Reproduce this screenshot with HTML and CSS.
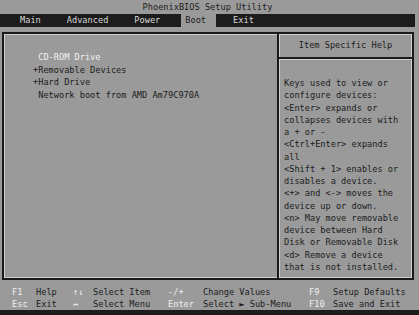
FILE: index.html
```html
<!DOCTYPE html>
<html lang="en">
<head>
    <meta charset="UTF-8">
    <title>PhoenixBIOS Setup Utility</title>
    <link rel="stylesheet" href="styles.css">
</head>
<body>
    <header class="title">PhoenixBIOS Setup Utility</header>
    <nav class="menu">
        <span class="tab">Main</span>
        <span class="tab">Advanced</span>
        <span class="tab">Power</span>
        <span class="tab active">Boot</span>
        <span class="tab">Exit</span>
    </nav>
    <main class="panel">
        <section class="boot-list">
            <p class="item selected"> CD-ROM Drive</p>
            <p class="item">+Removable Devices</p>
            <p class="item">+Hard Drive</p>
            <p class="item"> Network boot from AMD Am79C970A</p>
        </section>
        <aside class="help">
            <h2 class="help-title">Item Specific Help</h2>
            <div class="help-body">
                <p>Keys used to view or</p>
                <p>configure devices:</p>
                <p>&lt;Enter&gt; expands or</p>
                <p>collapses devices with</p>
                <p>a + or -</p>
                <p>&lt;Ctrl+Enter&gt; expands</p>
                <p>all</p>
                <p>&lt;Shift + 1&gt; enables or</p>
                <p>disables a device.</p>
                <p>&lt;+&gt; and &lt;-&gt; moves the</p>
                <p>device up or down.</p>
                <p>&lt;n&gt; May move removable</p>
                <p>device between Hard</p>
                <p>Disk or Removable Disk</p>
                <p>&lt;d&gt; Remove a device</p>
                <p>that is not installed.</p>
            </div>
        </aside>
    </main>
    <footer class="keys">
        <span class="key">F1</span><span class="desc">Help</span>
        <span class="key">&#8593;&#8595;</span><span class="desc">Select Item</span>
        <span class="key">-/+</span><span class="desc">Change Values</span>
        <span class="key">F9</span><span class="desc">Setup Defaults</span>
        <span class="key">Esc</span><span class="desc">Exit</span>
        <span class="key">&#8596;</span><span class="desc">Select Menu</span>
        <span class="key">Enter</span><span class="desc">Select &#9658; Sub-Menu</span>
        <span class="key">F10</span><span class="desc">Save and Exit</span>
    </footer>
</body>
</html>
```

FILE: styles.css
```css
/* Reset */
body, h2, p {
    margin: 0;
    padding: 0;
}
body {
    width: 419px;
    height: 315px;
    overflow: hidden;
    background-color: #9a9a9a;
    color: #1c1c1c;
    font-family: "DejaVu Sans Mono", "Liberation Mono", monospace;
    font-size: 8.65px;
    white-space: nowrap;
    display: flex;
    flex-direction: column;
}
.title {
    height: 14px;
    line-height: 14px;
    text-align: center;
    padding-right: 4px;
}
.menu {
    height: 13px;
    line-height: 13px;
    margin-right: 4px;
    padding-left: 15px;
    background-color: #1c1c1c;
    display: flex;
    gap: 16px;
}
.tab {
    padding: 0 5px;
    color: #d8d8d8;
}
.tab.active {
    background-color: #9a9a9a;
    color: #1c1c1c;
    padding: 0 10px 0 4px;
    margin-right: -4px;
}
.panel {
    margin: 5px 5px 0 2px;
    height: 248px;
    display: flex;
}
.boot-list {
    flex: 1;
    border: 2px solid #1a1a1a;
    border-right: none;
    box-shadow: inset 1px 1px 0 #cfcfcf, inset 0 -1px 0 #cfcfcf;
    padding: 17px 0 0 29px;
    line-height: 12.5px;
}
.item {
    white-space: pre;
}
.item.selected {
    color: #f2f2f2;
}
.help {
    width: 133px;
    border: 2px solid #1a1a1a;
    box-shadow: inset 1px 1px 0 #cfcfcf, inset -1px -1px 0 #cfcfcf;
    display: flex;
    flex-direction: column;
}
.help-title {
    font-size: 8.65px;
    font-weight: normal;
    height: 23px;
    line-height: 23px;
    text-align: center;
    border-bottom: 2px solid #1a1a1a;
    box-shadow: 0 1px 0 #cfcfcf;
}
.help-body {
    padding: 18px 0 0 5px;
    line-height: 12.27px;
}
.keys {
    flex: 1;
    display: grid;
    grid-template-columns: 24px 37px 20px 75px 35px 106px 24px 1fr;
    grid-auto-rows: 12px;
    line-height: 12px;
    padding: 6px 0 0 12px;
    border-bottom: 5px solid #1c1c1c;
}
.key {
    color: #f0f0f0;
}
```
